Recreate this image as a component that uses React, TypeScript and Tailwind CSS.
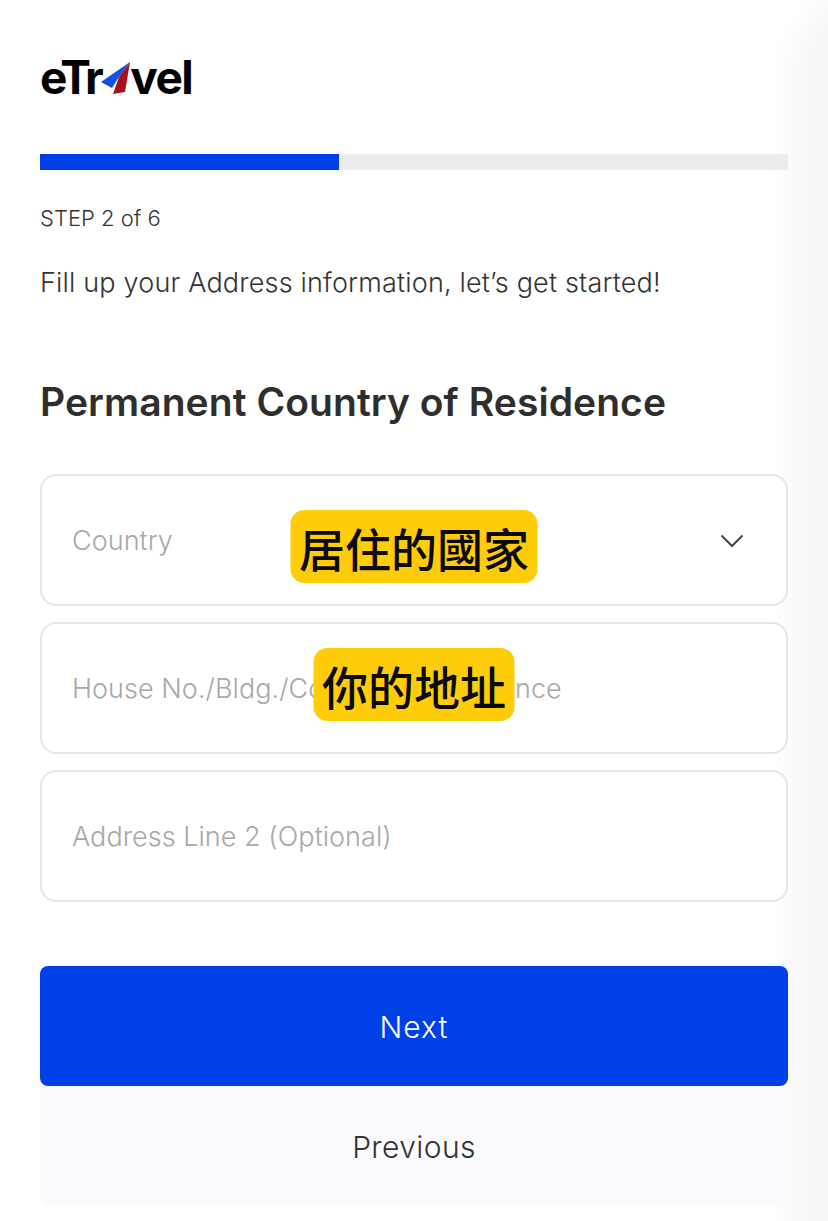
import React from "react";

const F = "[font-family:'Inter','Liberation_Sans',sans-serif]";

function Field({ label, children }: { label: string; children?: React.ReactNode }) {
  return (
    <div className="relative flex h-[132px] items-center justify-between rounded-[16px] border-2 border-[#e6e6e6] bg-white pl-[30px] pr-[42px]">
      <span className="pt-[2px] text-[27px] font-light tracking-[0.04px] text-[#a8a8a8]">{label}</span>
      {children}
    </div>
  );
}

function Logo() {
  return (
    <div className="flex h-[36px] items-center text-[46px] font-bold leading-none text-black [font-family:'Inter',sans-serif]">
      <span className="-mt-[3px] tracking-[-3.5px]">eTr</span>
      <svg width="32" height="34" viewBox="0 0 32 34" className="shrink-0">
        <path d="M30 1 L1 21 L12 27 L19 16 Z" fill="#1450e0" />
        <path d="M30 1 L19 16 L13 33 L25 31 Z" fill="#a80f16" />
      </svg>
      <span className="-ml-[2px] -mt-[3px] tracking-[-1.5px]">vel</span>
    </div>
  );
}

export default function App() {
  return (
    <div className={`relative min-h-[1221px] w-[828px] overflow-hidden bg-white ${F}`}>
      <div className="pointer-events-none absolute -right-[60px] top-0 h-[1300px] w-[80px] rounded-tl-[80px] bg-[#f7f7f7] shadow-[0_0_30px_18px_#f7f7f7]" />
      <div className="relative w-[828px] px-[40px] pt-[60px]">
        <Logo />
        <div className="mt-[58px] h-[16px] w-full bg-[#ececec]">
          <div className="h-full w-[299px] bg-[#0040e8]" />
        </div>
        <p className="mt-[33px] text-[22px] font-light leading-[30px] text-[#333]">STEP 2 of 6</p>
        <p className="mt-[32px] text-[27px] font-light leading-[36px] tracking-[0.18px] text-[#333]">Fill up your Address information, let’s get started!</p>
        <h1 className="mt-[76px] text-[39px] font-semibold leading-[50px] tracking-[0.07px] text-[#2e2e2e]">Permanent Country of Residence</h1>
        <div className="mt-[47px] flex flex-col gap-[16px]">
          <Field label="Country">
            <svg width="24" height="14" viewBox="0 0 24 14" fill="none" className="mt-[2px] shrink-0">
              <path d="M1.5 1.5 L12 12 L22.5 1.5" stroke="#444" strokeWidth="2" />
            </svg>
            <div className="absolute left-1/2 top-[34px] flex h-[73px] -translate-x-1/2 items-center rounded-[14px] bg-[#ffcc0a] px-[8.5px] text-[46px] font-medium leading-none text-[#0a0a0a] [font-family:'Noto_Sans_CJK_TC',sans-serif]">
              居住的國家
            </div>
          </Field>
          <Field label="House No./Bldg./Country of Residence">
            <div className="absolute left-1/2 top-[24px] flex h-[73px] -translate-x-1/2 items-center rounded-[14px] bg-[#ffcc0a] px-[8.5px] text-[46px] font-medium leading-none text-[#0a0a0a] [font-family:'Noto_Sans_CJK_TC',sans-serif]">
              你的地址
            </div>
          </Field>
          <Field label="Address Line 2 (Optional)" />
        </div>
        <div className="mt-[64px] flex h-[120px] items-center justify-center rounded-[8px] bg-[#0040e8] pt-[3px] text-[30px] font-light tracking-[1px] text-white">Next</div>
        <div className="flex h-[120px] items-center justify-center rounded-[8px] bg-[#fafaff] pt-[3px] text-[30px] font-light tracking-[0.4px] text-[#333]">Previous</div>
      </div>
    </div>
  );
}
